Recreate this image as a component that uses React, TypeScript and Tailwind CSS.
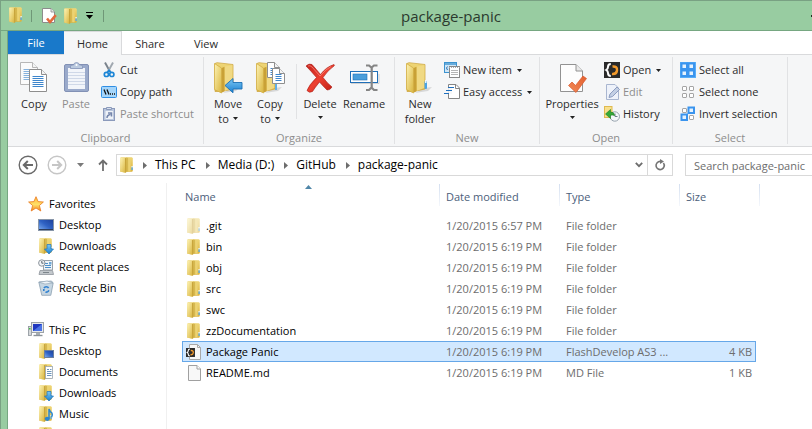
import React from "react";

type IconProps = { className?: string };

const Defs = () => (
  <svg className="absolute h-0 w-0" aria-hidden="true">
    <defs>
      <linearGradient id="fPale" x1="0" y1="0" x2="1" y2="1">
        <stop offset="0" stopColor="#fdf3b4" />
        <stop offset="1" stopColor="#d9b53f" />
      </linearGradient>
      <linearGradient id="fDeep" x1="0" y1="0" x2="0" y2="1">
        <stop offset="0" stopColor="#efd778" />
        <stop offset="1" stopColor="#dbb23c" />
      </linearGradient>
      <linearGradient id="blueArrow" x1="0" y1="0" x2="0" y2="1">
        <stop offset="0" stopColor="#7cc8f5" />
        <stop offset="1" stopColor="#1a80d0" />
      </linearGradient>
      <linearGradient id="redX" x1="0" y1="0" x2="1" y2="1">
        <stop offset="0" stopColor="#c2201a" />
        <stop offset="0.5" stopColor="#ec4030" />
        <stop offset="1" stopColor="#b81b12" />
      </linearGradient>
      <linearGradient id="check" x1="1" y1="0" x2="0" y2="1">
        <stop offset="0" stopColor="#e2602f" />
        <stop offset="1" stopColor="#f28a58" />
      </linearGradient>
      <linearGradient id="screen" x1="0" y1="1" x2="1" y2="0">
        <stop offset="0" stopColor="#7fb0f2" />
        <stop offset="0.5" stopColor="#2f62c4" />
        <stop offset="1" stopColor="#1c3f98" />
      </linearGradient>
      <linearGradient id="star" x1="0" y1="0" x2="0" y2="1">
        <stop offset="0" stopColor="#ffb43a" />
        <stop offset="0.55" stopColor="#ffe067" />
        <stop offset="1" stopColor="#f58220" />
      </linearGradient>
    </defs>
  </svg>
);

const FolderShape = () => (
  <g>
    <path d="M0.3 0.8 L1 0.3 H12 L12.8 1.2 V14 L12 14.8 H0.3 Z" fill="url(#fDeep)" />
    <path d="M0.3 0.8 L4.2 0.8 L5.4 2 V15.4 L4.4 15.8 L0.3 14.6 Z" fill="url(#fPale)" />
    <path d="M5 1.2 L6.6 0.6 V15 L5 16 Z" fill="#c8a53c" />
    <path d="M6.6 0.8 H8.2 V14.2 L6.6 15 Z" fill="#d6b84f" />
    <path d="M8.2 0.8 H10.6 V14.2 H8.2 Z" fill="#ecd373" />
    <rect x="11.4" y="9" width="1.4" height="1.6" fill="#e8f3fb" />
    <rect x="11.4" y="10.4" width="1.4" height="2.6" fill="#58aae6" />
  </g>
);

const Folder = ({ className = "" }: IconProps) => (
  <svg width="13" height="16" viewBox="0 0 13 16" className={`shrink-0 ${className}`}><FolderShape /></svg>
);

const BigFolderShape = () => (
  <g>
    <path d="M20 26 L28 25 L24 29 L11 31 Z" fill="#000" opacity="0.12" />
    <path d="M3 1.5 L5 0.7 L21 2.5 V27 L10 29.5 H3 Z" fill="url(#fDeep)" stroke="#cfaa48" strokeWidth="0.8" />
    <path d="M12.5 4.5 L20.4 3.2 V26 L12.5 29 Z" fill="#f0d983" />
    <path d="M2.5 1.5 L9.5 6 V31 L2.5 27.5 Z" fill="url(#fPale)" stroke="#d3af46" strokeWidth="0.8" />
    <path d="M9.8 6 L12.5 4.8 V29 L9.8 30.8 Z" fill="#c9a136" />
  </g>
);

const MoveTo = () => (
  <svg width="32" height="32" viewBox="0 0 32 32">
    <BigFolderShape />
    <path d="M13 23.5 L21 16.5 V20.5 H30 V27 H21 V30.8 Z" fill="url(#blueArrow)" stroke="#1b6fb4" strokeWidth="0.9" />
  </svg>
);

const Sheet = ({ x, y, w, h, lines }: { x: number; y: number; w: number; h: number; lines: number[] }) => (
  <g>
    <path d={`M${x} ${y} h${w - 5} l5 5 v${h - 5} h${-w} Z`} fill="#fff" stroke="#8e8e8e" strokeWidth="1" />
    <path d={`M${x + w - 5} ${y} v5 h5`} fill="#f3f3f3" stroke="#8e8e8e" strokeWidth="1" />
    {lines.map((l) => (
      <path key={l} d={`M${x + 3} ${y + l} h${w - 6}`} stroke="#3e86cc" strokeWidth="1" />
    ))}
  </g>
);

const CopyTo = () => (
  <svg width="32" height="32" viewBox="0 0 32 32">
    <BigFolderShape />
    <rect x="21" y="22" width="2" height="6" fill="#62aee6" />
    <Sheet x={13.5} y={0.5} w={12} h={15} lines={[6, 8, 10, 12]} />
    <Sheet x={18.5} y={6.5} w={12} h={15} lines={[6, 8, 10, 12]} />
  </svg>
);

const NewFolder = () => (
  <svg width="32" height="32" viewBox="0 0 32 32">
    <BigFolderShape />
    <rect x="20.5" y="19" width="2.5" height="8" rx="1" fill="#4ba4e6" />
    <rect x="21" y="18" width="1.5" height="3" fill="#eaf5fd" />
  </svg>
);

const CopyIcon = () => (
  <svg width="32" height="32" viewBox="0 0 32 32">
    <g opacity="0.6"><Sheet x={2.5} y={0.5} w={17} h={22} lines={[7, 9, 11, 13, 15, 17]} /></g>
    <Sheet x={11.5} y={7.5} w={17} h={22} lines={[7, 9, 11, 13, 15, 17]} />
  </svg>
);

const PasteIcon = () => (
  <svg width="32" height="32" viewBox="0 0 32 32">
    <rect x="4.5" y="2.5" width="24" height="27" rx="1.5" fill="#9aaacb" stroke="#8291b5" />
    <rect x="8" y="6" width="17" height="21" fill="#f2f5fa" />
    <path d="M8 10.5h17M8 13.5h17M8 16.5h17M8 19.5h17M8 22.5h17" stroke="#cfd8e8" />
    <path d="M10.5 6.5 V4.5 Q10.5 3 12 3 H13.5 Q14 0.5 16.5 0.5 Q19 0.5 19.5 3 H21 Q22.5 3 22.5 4.5 V6.5 Z" fill="#bccbe0" stroke="#8291b5" strokeWidth="0.8" />
    <circle cx="16.5" cy="3" r="1" fill="#fff" />
  </svg>
);

const Scissors = () => (
  <svg width="16" height="16" viewBox="0 0 16 16">
    <path d="M4 0.5 L9.2 10" stroke="#7a838c" strokeWidth="1.9" />
    <path d="M12 0.5 L6.8 10" stroke="#a0a8b0" strokeWidth="1.9" />
    <circle cx="5.4" cy="12.4" r="2.1" fill="none" stroke="#1d86d6" strokeWidth="1.7" />
    <circle cx="10.8" cy="12.4" r="2.1" fill="none" stroke="#1d86d6" strokeWidth="1.7" />
    <path d="M6.2 10.5 L8 8.2 L10 10.5" fill="none" stroke="#1d86d6" strokeWidth="1.5" />
  </svg>
);

const CopyPath = () => (
  <svg width="16" height="16" viewBox="0 0 16 16">
    <rect x="0.5" y="2.5" width="15" height="11" rx="1" fill="#a4d5fb" stroke="#2f8ee4" />
    <path d="M3 5.5 L5 10.5 M6 5.5 L8 10.5" stroke="#111" strokeWidth="1.3" />
    <path d="M9 10h1M11 10h1M13 10h1" stroke="#111" strokeWidth="1.3" />
  </svg>
);

const PasteShortcut = () => (
  <svg width="16" height="16" viewBox="0 0 16 16">
    <rect x="2.5" y="2.5" width="11" height="12" fill="#b9c6dd" stroke="#8b9abb" />
    <path d="M5.5 3.5 V1.5 H10.5 V3.5 Z" fill="#d6dfec" stroke="#8b9abb" />
    <rect x="4.5" y="5" width="7.5" height="8" fill="#eef2f8" />
    <path d="M6 12 Q6 9 9.5 8.5 M7 7 H10.5 V10.5" fill="none" stroke="#7586ac" strokeWidth="1.5" />
  </svg>
);

const DeleteIcon = () => (
  <svg width="32" height="32" viewBox="0 0 32 32">
    <path d="M2 4 Q5 1 8 2.5 Q12 7 16.5 12.5 Q22 5 30 2.5 Q31 3 30 4 Q24 8 19 15.5 Q23 21 28 25 Q26 28.5 23 28 Q19 24 15.5 20 Q11 25.5 8.5 29.5 Q5 31.5 3 28.5 Q5 23 12.5 15.5 Q7 9 2 4 Z" fill="url(#redX)" stroke="#a91b14" strokeWidth="0.6" />
    <path d="M4 4 Q6 3 8 5 L16 14 Q22 7 27 4.5" stroke="#f78578" strokeWidth="0.8" fill="none" />
  </svg>
);

const RenameIcon = () => (
  <svg width="32" height="32" viewBox="0 0 32 32">
    <path d="M3 21.5H31V12" stroke="#000" strokeOpacity="0.15" fill="none" />
    <rect x="2.5" y="9.5" width="27" height="11" fill="#fff" stroke="#1f6fb8" />
    <rect x="5" y="12" width="14" height="6" fill="#4a9edb" stroke="#1f6fb8" strokeWidth="0.6" />
    <path d="M18 3.5 H21 L23.5 5.5 L26 3.5 H29.5 M23.7 5 V26 M18 28 H21 L23.5 25.5 L26 28 H29.5" fill="none" stroke="#858585" strokeWidth="2.2" />
  </svg>
);

const NewItem = () => (
  <svg width="16" height="16" viewBox="0 0 16 16">
    <rect x="0.5" y="0.5" width="12" height="10" fill="#cfe6f7" stroke="#3c93cf" />
    <path d="M1 2h11" stroke="#3c93cf" strokeWidth="1.4" />
    <path d="M3.5 4.5 L2.5 6 L3.5 8" fill="none" stroke="#2a72b2" />
    <rect x="5.5" y="4.5" width="10" height="11" fill="#fff" stroke="#888" />
    <path d="M5 5.5h11" stroke="#aaa" strokeDasharray="1 1" />
    <path d="M7 8.5h7M7 10.5h7M7 12.5h7" stroke="#b5b5b5" />
  </svg>
);

const EasyAccess = () => (
  <svg width="16" height="16" viewBox="0 0 16 16">
    <path d="M4.5 0.5 H12 L15.5 4 V14.5 H4.5 Z" fill="#fff" stroke="#858585" />
    <path d="M11.5 0.5 V4.5 H15.5" fill="none" stroke="#858585" />
    <rect x="0" y="3" width="8" height="7" fill="#f5f6f7" opacity="0.85" />
    <path d="M4 3.5h6M2 6.5h6M0 9.5h5" stroke="#1e6fbe" strokeWidth="1.2" />
  </svg>
);

const PropertiesIcon = () => (
  <svg width="32" height="32" viewBox="0 0 32 32">
    <path d="M4.5 2.5 H20 L26.5 9 V29.5 H4.5 Z" fill="#fdfdfd" stroke="#929292" />
    <path d="M20 2.5 V9 H26.5" fill="#e9e9e9" stroke="#929292" />
    <path d="M12.5 23.5 L16 20 L19.5 23.5 L27 14 L30.5 16.5 L20 30.5 Z" fill="url(#check)" stroke="#d9562a" strokeWidth="0.7" />
  </svg>
);

const CheckDoc = () => (
  <svg width="15" height="16" viewBox="0 0 15 16">
    <path d="M0.5 0.5 H9 L12.5 4 V14.5 H0.5 Z" fill="#fff" stroke="#8c8c8c" />
    <path d="M9 0.5 V4 H12.5" fill="#e6e6e6" stroke="#8c8c8c" strokeWidth="0.8" />
    <path d="M5 10.5 L8 14 L13.8 7.2" fill="none" stroke="#e26a3c" strokeWidth="2.6" />
  </svg>
);

const FlashGlyph = () => (
  <g>
    <rect width="16" height="16" fill="#2a2a2a" />
    <path d="M6.8 2 Q4 2 4 5 Q4 7 2.2 8 Q4 9 4 11 Q4 14 6.8 14" fill="none" stroke="#fff" strokeWidth="2" />
    <path d="M8.5 4.5 Q13.5 4 13 8.5 Q12.5 12.5 8 12" fill="none" stroke="#f39a2b" strokeWidth="2.4" />
  </g>
);

const FlashIcon = () => <svg width="16" height="16" viewBox="0 0 16 16"><FlashGlyph /></svg>;

const EditIcon = () => (
  <svg width="16" height="16" viewBox="0 0 16 16">
    <path d="M2.5 0.5 H11 L14.5 4 V15.5 H2.5 Z" fill="#eef2fa" stroke="#a9b6d0" />
    <path d="M5 13.5 L6 10 L13 3 L15.5 5.5 L8.5 12.5 Z" fill="#c3cfe4" stroke="#8d9dc0" />
  </svg>
);

const HistoryIcon = () => (
  <svg width="16" height="16" viewBox="0 0 16 16">
    <rect x="0.5" y="0.5" width="7.5" height="11" fill="#f9e08c" stroke="#dfba50" />
    <circle cx="10.8" cy="10.5" r="4.7" fill="#f4f7fa" stroke="#98a3ae" />
    <path d="M11 7.5 V10.5 H13.5" fill="none" stroke="#6d7a88" />
    <path d="M1.5 8 L6.5 3.5 V6 Q10.5 6 10.5 9.5 Q9 8.8 6.5 9.2 V12.5 Z" fill="#35a937" stroke="#1c7a21" strokeWidth="0.6" />
  </svg>
);

const Squares = ({ on }: { on: boolean[] }) => (
  <svg width="16" height="16" viewBox="0 0 16 16">
    {on.every(Boolean) && <rect x="0" y="0" width="16" height="16" fill="#58aef8" />}
    {on.map((active, i) => {
      const x = i % 2 ? 9 : 2;
      const y = i > 1 ? 9 : 2;
      return active ? (
        <g key={i}>
          <rect x={x - 1.5} y={y - 1.5} width="7.5" height="7.5" fill="#3a94ee" />
          <rect x={x + 0.5} y={y + 0.5} width="3.5" height="3.5" fill="#e4f2fe" />
        </g>
      ) : (
        <rect key={i} x={x + 0.5} y={y + 0.5} width="4" height="4" rx="0.5" fill="#fff" stroke="#a5a5a5" />
      );
    })}
  </svg>
);

const Star = () => (
  <svg width="16" height="16" viewBox="0 0 16 16">
    <path d="M8 0.7 L10.1 5.6 L15.4 6 L11.4 9.5 L12.8 15 L8 12 L3.2 15 L4.6 9.5 L0.6 6 L5.9 5.6 Z" fill="url(#star)" stroke="#e87a1e" strokeWidth="0.8" />
  </svg>
);

const DesktopIcon = () => (
  <svg width="16" height="16" viewBox="0 0 16 16">
    <rect x="0.5" y="2.5" width="15" height="11" fill="url(#screen)" stroke="#8795a8" />
    <path d="M1 12.5h14" stroke="#2c3c5c" />
  </svg>
);

const DownArrow = () => (
  <path d="M9 6.5 H13 V11 H15.5 L11 16 L6.5 11 H9 Z" fill="url(#blueArrow)" stroke="#1e72b8" strokeWidth="0.7" />
);

const DownloadsIcon = () => (
  <svg width="16" height="16" viewBox="0 0 16 16"><g transform="translate(1 0)"><FolderShape /></g><DownArrow /></svg>
);

const RecentIcon = () => (
  <svg width="16" height="16" viewBox="0 0 16 16">
    <path d="M5.5 1.5 H14.5 V11 H5.5 Z" fill="#eef3f7" stroke="#9aa3ab" />
    <path d="M7 4.5h3M7 6.5h6M7 8.5h6" stroke="#4c8fc9" />
    <rect x="11" y="3" width="2.5" height="2.5" fill="#6ea7d6" />
    <circle cx="3.8" cy="4" r="3.2" fill="#f3f5f7" stroke="#8b949c" />
    <path d="M3.8 2 V4.2 H5.5" fill="none" stroke="#5b6670" />
    <path d="M2 11.5 H14.5 L15.5 15.5 H1 Z" fill="#c3c8cc" stroke="#8f969c" strokeWidth="0.8" />
    <path d="M5 13.5h6" stroke="#7d858b" />
  </svg>
);

const RecycleIcon = () => (
  <svg width="16" height="16" viewBox="0 0 16 16">
    <path d="M0.8 2 L13.5 1 L15.2 3 L12.8 15.3 H3.8 Z" fill="#c6d6e2" stroke="#8ba0b0" strokeWidth="0.8" />
    <path d="M1.2 2.3 L7 4 L15 3 L9 1 Z" fill="#eef4f8" stroke="#8ba0b0" strokeWidth="0.6" />
    <path d="M6 8.2 A2.6 2.6 0 0 1 10.6 8 M10.8 10.3 A2.6 2.6 0 0 1 7.5 12 M5.8 11 V9" fill="none" stroke="#2f80d0" strokeWidth="1.6" />
  </svg>
);

const PcIcon = () => (
  <svg width="16" height="16" viewBox="0 0 16 16">
    <rect x="0.5" y="4.5" width="3" height="9" fill="#d5d8da" stroke="#8c9399" strokeWidth="0.8" />
    <rect x="1" y="6" width="1.5" height="1.5" fill="#40c040" />
    <rect x="3.5" y="0.5" width="12" height="10" fill="#e5e8ea" stroke="#9ca2a7" />
    <rect x="5" y="2" width="9" height="7" fill="#2038c0" />
    <path d="M5 9 L14 2 V9 Z" fill="#4c74e6" />
    <path d="M8 11h4v2h-4z" fill="#a8aeb3" />
    <path d="M5.5 13.5h9" stroke="#8c9399" strokeWidth="1.4" />
  </svg>
);

const FolderDesktop = () => (
  <svg width="16" height="16" viewBox="0 0 16 16">
    <g transform="translate(1 0)"><FolderShape /></g>
    <rect x="6.5" y="7.5" width="9" height="7" fill="url(#screen)" stroke="#6b7f9e" />
  </svg>
);

const FolderDocs = () => (
  <svg width="16" height="16" viewBox="0 0 16 16">
    <g transform="translate(1 0)"><FolderShape /></g>
    <rect x="7.5" y="2.5" width="7" height="12" fill="#fff" stroke="#9aa5b0" strokeWidth="0.8" />
    <path d="M9 5.5h2M12 5.5h1.5M9 7.5h4.5M9 9.5h4.5M9 11.5h4.5" stroke="#6c95bd" />
  </svg>
);

const FolderMusic = () => (
  <svg width="16" height="16" viewBox="0 0 16 16">
    <g transform="translate(1 0)"><FolderShape /></g>
    <ellipse cx="9.3" cy="12.8" rx="2.6" ry="2.1" fill="#2a86d0" />
    <path d="M11 12.5 V3 Q12 6 14 7.2 Q14.8 9 13.6 11" fill="none" stroke="#2a86d0" strokeWidth="1.5" />
  </svg>
);

const FolderPlain = () => (
  <svg width="16" height="16" viewBox="0 0 16 16"><g transform="translate(1 0)"><FolderShape /></g></svg>
);

const ProjectFile = () => (
  <svg width="16" height="16" viewBox="0 0 16 16">
    <path d="M3.5 0.5 H11.5 L14.5 3.5 V15.5 H3.5 Z" fill="#f7f7f7" stroke="#a8a8a8" />
    <path d="M11.5 0.5 V3.5 H14.5" fill="none" stroke="#a8a8a8" />
    <g transform="translate(0 4) scale(0.56)"><FlashGlyph /></g>
  </svg>
);

const PlainFile = () => (
  <svg width="16" height="16" viewBox="0 0 16 16">
    <path d="M2.5 0.5 H11 L14.5 4 V15.5 H2.5 Z" fill="#f8f8f8" stroke="#a0a0a0" />
    <path d="M11 0.5 V4 H14.5" fill="#fff" stroke="#a0a0a0" />
  </svg>
);

const Caret = ({ className = "text-[#222222]" }: IconProps) => (
  <svg width="5" height="3" viewBox="0 0 5 3" className={`shrink-0 ${className}`}><path d="M0 0h5L2.5 3z" fill="currentColor" /></svg>
);

function LargeButton({ icon, lines, caret, className = "w-[42px]", muted }: { icon: React.ReactNode; lines: string[]; caret?: boolean; className?: string; muted?: boolean }) {
  return (
    <button type="button" className={`flex shrink-0 flex-col items-center gap-[2px] pt-[3px] leading-[15px] ${muted ? "text-[#8d8d8d]" : ""} ${className}`}>
      {icon}
      <span className="flex flex-col items-center whitespace-nowrap">
        {lines.map((line, i) => (
          <span key={line} className="flex items-center gap-1">
            {line}
            {caret && i === 1 && <Caret />}
          </span>
        ))}
        {caret && lines.length === 1 && <span className="flex h-3 items-center"><Caret /></span>}
      </span>
    </button>
  );
}

function SmallButton({ icon, label, caret, muted }: { icon: React.ReactNode; label: string; caret?: boolean; muted?: boolean }) {
  return (
    <button type="button" className={`flex h-[22px] items-center gap-[3px] whitespace-nowrap ${muted ? "text-[#8d8d8d]" : ""}`}>
      {icon}
      <span>{label}</span>
      {caret && <Caret className="ml-[2px] text-[#222222]" />}
    </button>
  );
}

function Group({ label, className, children }: { label: string; className: string; children: React.ReactNode }) {
  return (
    <section aria-label={label} className={`flex h-[91px] shrink-0 ${className}`}>
      <div className="flex min-w-0 flex-1 flex-col justify-between pt-1">
        <div className="flex items-start">{children}</div>
        <div className="text-center leading-4 text-[#8d8d8d]">{label}</div>
      </div>
      <div className="my-[2px] w-px bg-[#e1e2e4]" />
    </section>
  );
}

function Ribbon() {
  return (
    <div className="flex shrink-0 overflow-hidden border-b border-[#d9dadc] bg-[#f5f6f7] text-[#2b2b2b]">
      <Group label="Clipboard" className="w-[196px]">
        <LargeButton className="ml-[5px] w-[42px]" icon={<CopyIcon />} lines={["Copy"]} />
        <LargeButton icon={<PasteIcon />} lines={["Paste"]} muted />
        <div className="ml-1 flex flex-col">
          <SmallButton icon={<Scissors />} label="Cut" />
          <SmallButton icon={<CopyPath />} label="Copy path" />
          <SmallButton icon={<PasteShortcut />} label="Paste shortcut" muted />
        </div>
      </Group>
      <Group label="Organize" className="w-[191px]">
        <LargeButton className="ml-[3px] w-[42px]" icon={<MoveTo />} lines={["Move", "to"]} caret />
        <LargeButton icon={<CopyTo />} lines={["Copy", "to"]} caret />
        <div className="mt-[5px] ml-[5px] h-[55px] w-px bg-[#e1e2e4]" />
        <LargeButton className="ml-[2px] w-[42px]" icon={<DeleteIcon />} lines={["Delete"]} caret />
        <LargeButton className="w-[46px]" icon={<RenameIcon />} lines={["Rename"]} />
      </Group>
      <Group label="New" className="w-[145px]">
        <LargeButton className="ml-1 w-[42px]" icon={<NewFolder />} lines={["New", "folder"]} />
        <div className="ml-[3px] flex flex-col">
          <SmallButton icon={<NewItem />} label="New item" caret />
          <SmallButton icon={<EasyAccess />} label="Easy access" caret />
        </div>
      </Group>
      <Group label="Open" className="w-[133px]">
        <LargeButton className="ml-1 w-[56px]" icon={<PropertiesIcon />} lines={["Properties"]} caret />
        <div className="ml-1 flex flex-col">
          <SmallButton icon={<FlashIcon />} label="Open" caret />
          <SmallButton icon={<EditIcon />} label="Edit" muted />
          <SmallButton icon={<HistoryIcon />} label="History" />
        </div>
      </Group>
      <Group label="Select" className="w-[115px]">
        <div className="ml-[7px] flex flex-col">
          <SmallButton icon={<Squares on={[true, true, true, true]} />} label="Select all" />
          <SmallButton icon={<Squares on={[false, false, false, false]} />} label="Select none" />
          <SmallButton icon={<Squares on={[false, true, true, false]} />} label="Invert selection" />
        </div>
      </Group>
    </div>
  );
}

function TitleBar() {
  return (
    <header className="flex h-[30px] shrink-0 items-center border-b border-[#76a781] pl-2 text-[#2b3a2e]">
      <Folder className="mb-px" />
      <span className="ml-[9px] h-3 w-px bg-[#6f9777]" />
      <button type="button" aria-label="Properties" className="ml-[10px]"><CheckDoc /></button>
      <button type="button" aria-label="New folder" className="ml-[7px]"><Folder /></button>
      <button type="button" aria-label="Customize toolbar" className="ml-[9px] flex flex-col items-center gap-[2px] text-black">
        <span className="h-px w-[7px] bg-black" />
        <svg width="7" height="4" viewBox="0 0 7 4"><path d="M0 0h7L3.5 4z" fill="currentColor" /></svg>
      </button>
      <span className="ml-[10px] h-3 w-px bg-[#6f9777]" />
      <h1 className="flex-1 pl-[297px] text-[15px] leading-5">package-panic</h1>
      <button type="button" aria-label="Minimize" className="h-[2px] w-px bg-[#1d2a20]" />
    </header>
  );
}

function Tabs() {
  return (
    <nav className="flex h-6 shrink-0 leading-4 text-[#2b2b2b]">
      <div className="w-14 border-b border-[#d9dadc]">
        <button type="button" className="h-[23px] w-full bg-[#1979ca] pt-px text-white">File</button>
      </div>
      <button type="button" className="w-[58px] border-t border-r border-[#d9dadc] bg-[#f5f6f7] pt-px">Home</button>
      <button type="button" className="w-14 border-b border-[#d9dadc] pt-[2px]">Share</button>
      <button type="button" className="w-14 border-b border-[#d9dadc] pt-[2px]">View</button>
      <div className="flex-1 border-b border-[#d9dadc]" />
    </nav>
  );
}

const CircleArrow = ({ flip, className }: { flip?: boolean; className: string }) => (
  <svg width="20" height="20" viewBox="0 0 20 20" className={className}>
    <circle cx="10" cy="10" r="8.8" fill="none" stroke="currentColor" strokeWidth="1.4" />
    <path d={flip ? "M5 10h9M10.2 6l4 4-4 4" : "M15 10H6M9.8 6l-4 4 4 4"} fill="none" stroke="currentColor" strokeWidth="2" />
  </svg>
);

function AddressBar() {
  const crumbs = ["This PC", "Media (D:)", "GitHub", "package-panic"];
  return (
    <div className="flex h-9 shrink-0 items-center pl-[10px] text-[12px] text-black">
      <button type="button" aria-label="Back"><CircleArrow className="text-[#6a6a6a]" /></button>
      <button type="button" aria-label="Forward" className="ml-[9px]"><CircleArrow flip className="text-[#c6c6c6]" /></button>
      <button type="button" aria-label="Recent locations" className="ml-[10px]">
        <svg width="7" height="4" viewBox="0 0 7 4"><path d="M0 0h7L3.5 4z" fill="#7a7a7a" /></svg>
      </button>
      <button type="button" aria-label="Up" className="ml-[14px]">
        <svg width="10" height="12" viewBox="0 0 10 12"><path d="M5 12V2M1 5.5l4-4 4 4" fill="none" stroke="#6f6f6f" strokeWidth="1.8" /></svg>
      </button>
      <div className="ml-2 flex h-[22px] min-w-0 flex-1 items-center border border-[#d9d9d9] pl-[3px]">
        <Folder />
        {crumbs.map((c) => (
          <React.Fragment key={c}>
            <svg width="4" height="7" viewBox="0 0 4 7" className="mr-2 ml-[10px] shrink-0"><path d="M0 0l4 3.5L0 7z" fill="#6d6d6d" /></svg>
            <a href="#" className="whitespace-nowrap">{c}</a>
          </React.Fragment>
        ))}
        <button type="button" aria-label="Previous locations" className="ml-auto flex h-full w-[18px] items-center justify-center border-r border-[#d9d9d9]">
          <svg width="8" height="6" viewBox="0 0 8 6"><path d="M0.8 0.8L4 4.2 7.2 0.8" fill="none" stroke="#6d6d6d" strokeWidth="1.8" /></svg>
        </button>
        <button type="button" aria-label="Refresh" className="flex h-full w-[24px] items-center justify-center">
          <svg width="12" height="12" viewBox="0 0 12 12">
            <path d="M9.4 4 A4.1 4.1 0 1 1 6.5 2.4" fill="none" stroke="#747474" strokeWidth="1.6" />
            <path d="M6 0 L10 2.4 L6 5 Z" fill="#747474" />
          </svg>
        </button>
      </div>
      <input type="text" aria-label="Search package-panic" placeholder="Search package-panic" className="ml-3 h-[22px] w-[127px] shrink-0 border border-r-0 border-[#d9d9d9] bg-white pl-2 text-[11px] outline-none placeholder:text-[#6d6d6d] placeholder:opacity-100" />
    </div>
  );
}

type TreeItem = { name: string; icon: React.ReactNode; iconOnly?: boolean };

const tree: { title: string; icon: React.ReactNode; items: TreeItem[] }[] = [
  {
    title: "Favorites",
    icon: <Star />,
    items: [
      { name: "Desktop", icon: <DesktopIcon /> },
      { name: "Downloads", icon: <DownloadsIcon /> },
      { name: "Recent places", icon: <RecentIcon /> },
      { name: "Recycle Bin", icon: <RecycleIcon /> },
    ],
  },
  {
    title: "This PC",
    icon: <PcIcon />,
    items: [
      { name: "Desktop", icon: <FolderDesktop /> },
      { name: "Documents", icon: <FolderDocs /> },
      { name: "Downloads", icon: <DownloadsIcon /> },
      { name: "Music", icon: <FolderMusic /> },
      { name: "Pictures", icon: <FolderPlain />, iconOnly: true },
    ],
  },
];

function Sidebar() {
  return (
    <aside className="flex w-[159px] shrink-0 flex-col gap-[21px] overflow-hidden border-r border-[#f0f0f0] pt-[10px] whitespace-nowrap text-black">
      {tree.map((g) => (
        <div key={g.title} className="shrink-0">
          <a href="#" className="flex h-[21px] items-center gap-[5px] pl-5">{g.icon}{g.title}</a>
          <ul>
            {g.items.map(({ name, icon, iconOnly }) => (
              <li key={name}>
                <a href="#" aria-label={name} className="flex h-[21px] items-center gap-[5px] pl-[30px]">{icon}{!iconOnly && name}</a>
              </li>
            ))}
          </ul>
        </div>
      ))}
    </aside>
  );
}

const files = [
  [".git", "1/20/2015 6:57 PM", "File folder", ""],
  ["bin", "1/20/2015 6:19 PM", "File folder", ""],
  ["obj", "1/20/2015 6:19 PM", "File folder", ""],
  ["src", "1/20/2015 6:19 PM", "File folder", ""],
  ["swc", "1/20/2015 6:19 PM", "File folder", ""],
  ["zzDocumentation", "1/20/2015 6:19 PM", "File folder", ""],
  ["Package Panic", "1/20/2015 6:19 PM", "FlashDevelop AS3 ...", "4 KB"],
  ["README.md", "1/20/2015 6:19 PM", "MD File", "1 KB"],
];

function fileIcon(name: string) {
  if (name === "Package Panic") return <ProjectFile />;
  if (name === "README.md") return <PlainFile />;
  return <span className="w-4 pl-px"><Folder className={name === ".git" ? "opacity-50" : ""} /></span>;
}

const columns = [
  { name: "Name", cell: "w-[258px] pl-[3px]", edge: "right-0" },
  { name: "Date modified", cell: "w-[120px] pl-[6px]", edge: "right-0" },
  { name: "Type", cell: "w-[120px] pl-[6px]", edge: "right-0" },
  { name: "Size", cell: "w-[76px] pl-[6px]", edge: "-right-1" },
];

function FileList() {
  return (
    <main className="min-w-0 flex-1 overflow-hidden pl-[15px]">
      <table className="w-[574px] table-fixed border-collapse whitespace-nowrap text-[#6d6d6d]">
        <thead>
          <tr className="h-8 text-left text-[#4c607a]">
            {columns.map((c) => (
              <th key={c.name} scope="col" className={`relative pt-[6px] align-top leading-4 font-normal ${c.cell}`}>
                {c.name}
                <span className={`absolute top-px h-[22px] w-px bg-linear-to-b from-[#d5e0f0] to-[#f4f7fc] ${c.edge}`} />
                {c.name === "Name" && (
                  <svg width="7" height="4" viewBox="0 0 7 4" className="absolute top-[2px] left-[123px]"><path d="M0 4h7L3.5 0z" fill="#4f86a8" /></svg>
                )}
              </th>
            ))}
          </tr>
        </thead>
        <tbody>
          {files.map(([name, date, type, size]) => (
            <tr key={name} className={`h-[21px] ${name === "Package Panic" ? "bg-[#d1e8ff] outline-1 -outline-offset-1 outline-[#66a7e8]" : ""}`}>
              <td className="p-0 pl-1 text-black"><span className="flex items-center gap-1">{fileIcon(name)}{name}</span></td>
              <td className="p-0 pl-[6px]">{date}</td>
              <td className="p-0 pl-[6px]">{type}</td>
              <td className="p-0 pr-1 text-right">{size}</td>
            </tr>
          ))}
        </tbody>
      </table>
    </main>
  );
}

export default function App() {
  return (
    <div className="flex h-screen flex-col overflow-hidden border-t border-l border-[#79a183] bg-[#98cca1] font-['Open_Sans','Noto_Sans',sans-serif] text-[11px] leading-4">
      <Defs />
      <TitleBar />
      <div className="ml-[6px] flex min-h-0 flex-1 flex-col border-l border-[#76a781] bg-white">
        <Tabs />
        <Ribbon />
        <AddressBar />
        <div className="flex min-h-0 flex-1">
          <Sidebar />
          <FileList />
        </div>
      </div>
    </div>
  );
}
